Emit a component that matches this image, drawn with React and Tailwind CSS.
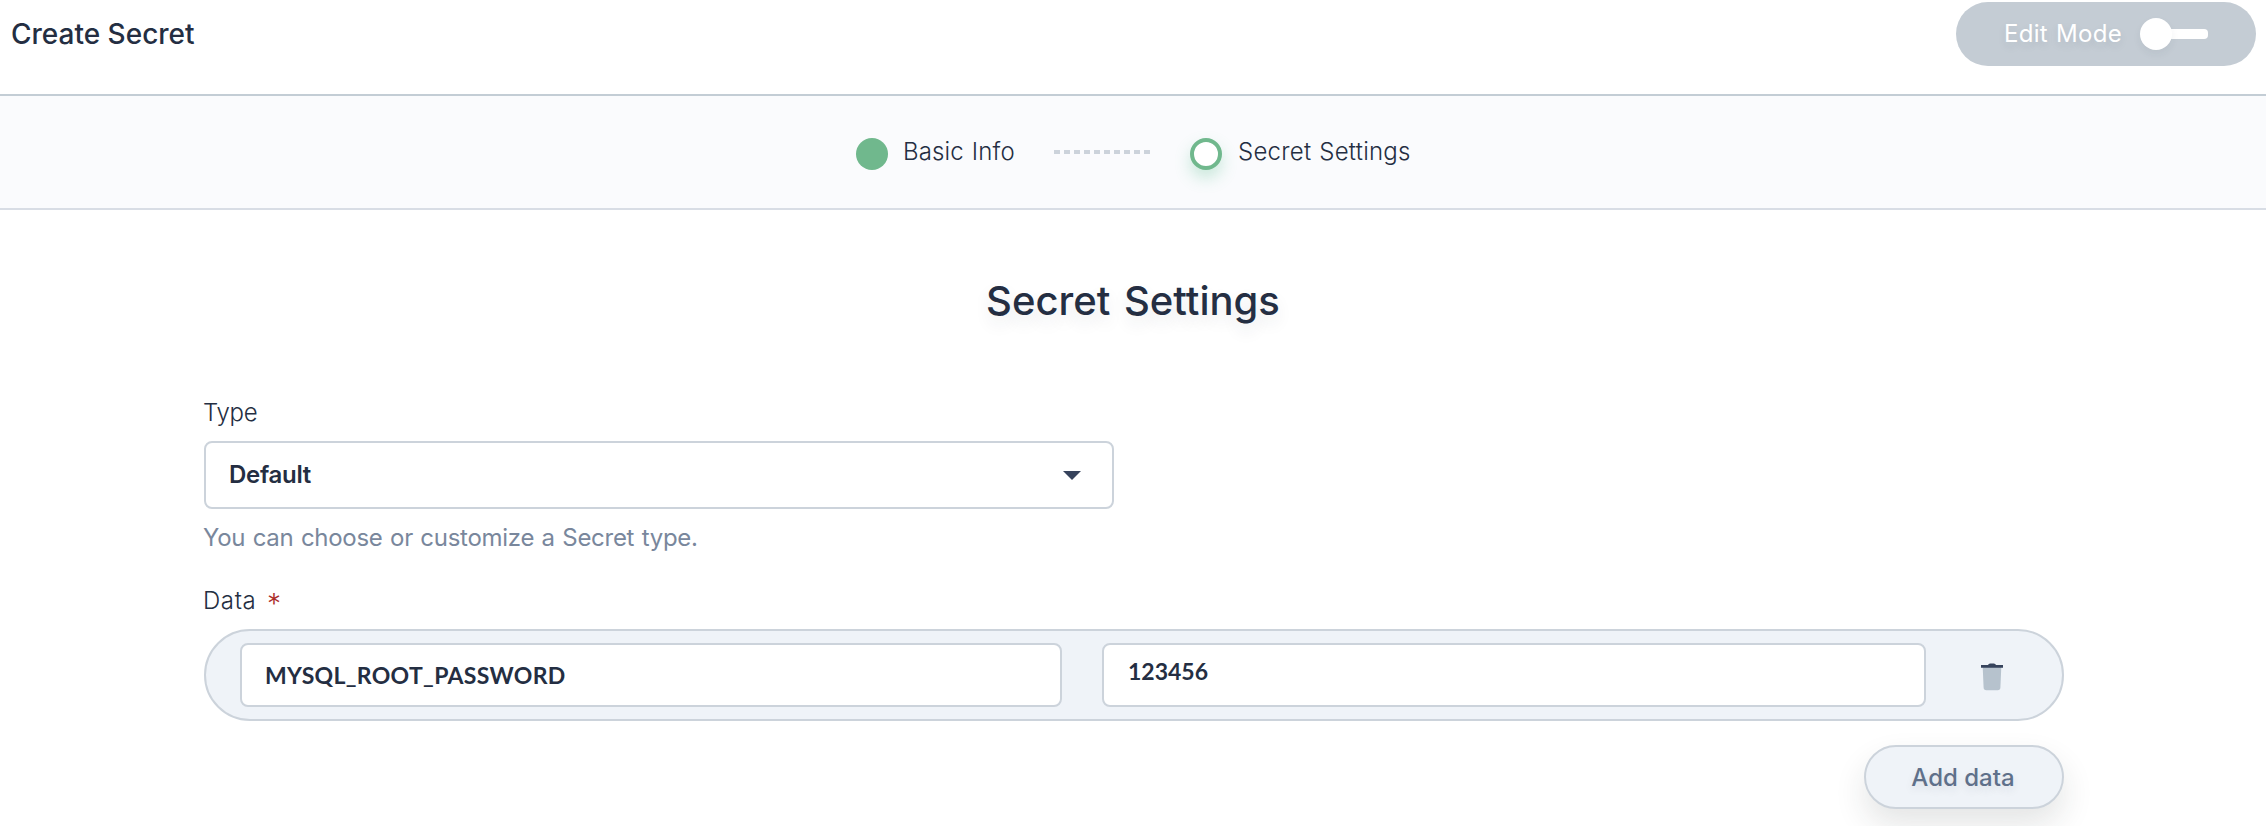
const DASHES = Array.from({ length: 10 }, (_, i) => i);

function Header() {
  return (
    <header className="flex h-24 items-start justify-between border-b-2 border-[#c3cdd5] bg-white pt-0.5 pr-[10px] pl-[11px]">
      <h1 className="h-16 text-[28px] leading-[65px] font-medium">Create Secret</h1>
      <button
        type="button"
        className="flex h-16 w-[300px] items-center rounded-full bg-[#c4ccd4] pl-[48px] text-2xl leading-[64px] text-white"
      >
        <span className="w-[136px] text-left tracking-[0.3px] whitespace-nowrap [word-spacing:1px] [text-shadow:0_4px_8px_rgba(36,46,66,0.1)]">
          Edit Mode
        </span>
        <span className="flex items-center">
          <span className="z-10 size-8 rounded-full bg-white shadow-[0_4px_8px_rgba(36,46,66,0.06)]" />
          <span className="-ml-2 h-[10px] w-11 rounded bg-white" />
        </span>
      </button>
    </header>
  );
}

function Steps() {
  return (
    <nav className="flex h-[114px] items-center justify-center border-b-2 border-[#d8dde5] bg-[#fafbfd] text-2xl font-light">
      <span className="mt-1 size-8 rounded-full bg-[#70b88d]" />
      <span className="ml-[15px] w-[151px] tracking-[0.15px] whitespace-nowrap [word-spacing:1px]">Basic Info</span>
      <span className="flex w-24 gap-1">
        {DASHES.map((i) => (
          <span key={i} className="h-1 w-1.5 bg-[#ccd3db]" />
        ))}
      </span>
      <span className="mt-1 ml-10 size-8 rounded-full border-4 border-[#70b88d] bg-white shadow-[0_8px_16px_rgba(85,188,138,0.3)]" />
      <span className="ml-4 w-[172px] tracking-[0.25px] whitespace-nowrap [word-spacing:1px]">Secret Settings</span>
    </nav>
  );
}

function TrashIcon() {
  return (
    <svg width="22" height="28" viewBox="0 0 22 28" fill="none">
      <path d="M1.700 4h18.600l-.9 20.500a2.800 2.800 0 0 1-2.800 2.700H5.400a2.800 2.800 0 0 1-2.800-2.700z" fill="#b6c2cd" />
      <path d="M0 2h7l.8-1q.6-.6 1.400-.6h3.600q.8 0 1.400.6l.8 1h7v2.800H0z" fill="#36435c" />
    </svg>
  );
}

function DataRow() {
  return (
    <div className="flex h-[92px] items-center rounded-full border-2 border-[#ccd3db] bg-[#eff3f8] pr-[59px] pl-[34px] font-[Lato,sans-serif] text-[23px] font-bold">
      <div className="flex h-16 w-[822px] items-center rounded-lg border-2 border-[#ccd3db] bg-white px-[23px] tracking-[0.32px]">
        MYSQL_ROOT_PASSWORD
      </div>
      <div className="ml-10 flex h-16 w-[824px] items-center rounded-lg border-2 border-[#ccd3db] bg-white px-6 pb-2">
        123456
      </div>
      <button type="button" aria-label="Delete" className="ml-[55px] pt-1">
        <TrashIcon />
      </button>
    </div>
  );
}

export default function App() {
  return (
    <div className="h-[826px] w-[2266px] overflow-hidden bg-white font-[Inter,sans-serif] text-[#242e42]">
      <Header />
      <Steps />
      <main className="flex flex-col pt-[66px]">
        <h2 className="text-center text-[40px] leading-[50px] font-medium [font-variant-ligatures:none] [word-spacing:3px] [text-shadow:0_8px_16px_rgba(36,46,66,0.1)]">
          Secret Settings
        </h2>
        <form className="mt-[71px] ml-[204px] flex w-[1860px] flex-col text-2xl">
          <label className="-ml-px h-[30px] pt-px leading-[30px] font-light tracking-[-0.3px]">Type</label>
          <div className="mt-[14px] flex h-[68px] w-[910px] items-center justify-between rounded-lg border-2 border-[#ccd3db] bg-white pr-[31px] pl-[23px] font-semibold">
            <span className="tracking-[-0.3px]">Default</span>
            <svg width="18" height="9" viewBox="0 0 18 9">
              <path d="M0 0h18L9 9z" fill="#36435c" />
            </svg>
          </div>
          <p className="mt-3 -ml-px h-8 pt-px leading-8 tracking-[-0.28px] text-[#79879c] [word-spacing:1px]">
            You can choose or customize a Secret type.
          </p>
          <label className="mt-8 -ml-px flex h-8 leading-8 font-light">
            <span className="w-16 tracking-[0.6px]">Data</span>
            <span className="pt-[3px] text-[28px] text-[#ab2f29]">*</span>
          </label>
          <div className="mt-3">
            <DataRow />
          </div>
          <button
            type="button"
            className="mt-6 h-16 w-[200px] self-end rounded-full border-2 border-[#ccd3db] bg-[#eff3f8] pt-px pr-0.5 font-medium text-[#5f708a] shadow-[0_16px_32px_rgba(35,45,45,0.12)] [text-shadow:0_4px_8px_rgba(36,46,66,0.1)]"
          >
            Add data
          </button>
        </form>
      </main>
    </div>
  );
}
